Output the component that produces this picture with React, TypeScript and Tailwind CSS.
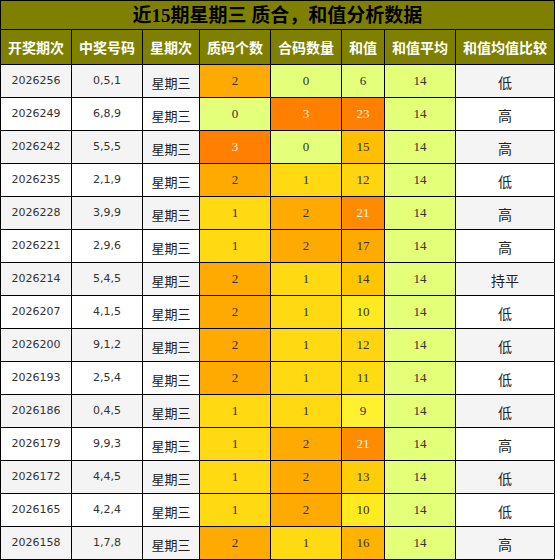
import React from 'react';

type Row = { issue: string; nums: string; prime: number; comp: number; sum: number; cmp: string };

const rows: Row[] = [
  { issue: '2026256', nums: '0,5,1', prime: 2, comp: 0, sum: 6, cmp: '低' },
  { issue: '2026249', nums: '6,8,9', prime: 0, comp: 3, sum: 23, cmp: '高' },
  { issue: '2026242', nums: '5,5,5', prime: 3, comp: 0, sum: 15, cmp: '高' },
  { issue: '2026235', nums: '2,1,9', prime: 2, comp: 1, sum: 12, cmp: '低' },
  { issue: '2026228', nums: '3,9,9', prime: 1, comp: 2, sum: 21, cmp: '高' },
  { issue: '2026221', nums: '2,9,6', prime: 1, comp: 2, sum: 17, cmp: '高' },
  { issue: '2026214', nums: '5,4,5', prime: 2, comp: 1, sum: 14, cmp: '持平' },
  { issue: '2026207', nums: '4,1,5', prime: 2, comp: 1, sum: 10, cmp: '低' },
  { issue: '2026200', nums: '9,1,2', prime: 2, comp: 1, sum: 12, cmp: '低' },
  { issue: '2026193', nums: '2,5,4', prime: 2, comp: 1, sum: 11, cmp: '低' },
  { issue: '2026186', nums: '0,4,5', prime: 1, comp: 1, sum: 9, cmp: '低' },
  { issue: '2026179', nums: '9,9,3', prime: 1, comp: 2, sum: 21, cmp: '高' },
  { issue: '2026172', nums: '4,4,5', prime: 1, comp: 2, sum: 13, cmp: '低' },
  { issue: '2026165', nums: '4,2,4', prime: 1, comp: 2, sum: 10, cmp: '低' },
  { issue: '2026158', nums: '1,7,8', prime: 2, comp: 1, sum: 16, cmp: '高' },
];

// count cells: 0..3
const countCls: Record<number, string> = {
  0: 'bg-[#e4ff7a] text-[#333]',
  1: 'bg-[#ffd911] text-[#333]',
  2: 'bg-[#ffaa00] text-[#333]',
  3: 'bg-[#ff8000] text-[#f4f4f4]',
};

const sumCls: Record<number, string> = {
  6: 'bg-[#e4ff7a] text-[#333]',
  9: 'bg-[#fff030] text-[#333]',
  10: 'bg-[#ffea20] text-[#333]',
  11: 'bg-[#ffdc12] text-[#333]',
  12: 'bg-[#ffd512] text-[#333]',
  13: 'bg-[#ffcc08] text-[#333]',
  14: 'bg-[#ffc600] text-[#333]',
  15: 'bg-[#ffbf00] text-[#333]',
  16: 'bg-[#ffb200] text-[#333]',
  17: 'bg-[#ffaa00] text-[#333]',
  21: 'bg-[#ff8c00] text-[#f4f4f4]',
  23: 'bg-[#ff8000] text-[#f4f4f4]',
};

const headers = ['开奖期次', '中奖号码', '星期次', '质码个数', '合码数量', '和值', '和值平均', '和值均值比较'];
const widths = ['w-[71px]', 'w-[71px]', 'w-[57px]', 'w-[71px]', 'w-[71px]', 'w-[43px]', 'w-[71px]', 'w-[99px]'];

const td = 'border border-black p-0 text-center align-middle';
const serif = "font-['Liberation_Serif','Noto_Sans_CJK_SC',serif] text-[13px]";
const sans = "font-['DejaVu_Sans','Noto_Sans_CJK_SC',sans-serif] text-[11px] text-[#333]";
const cjk = "font-['Noto_Sans_CJK_SC',sans-serif] text-[#222]";

export default function App() {
  return (
    <div className="w-[555px] h-[560px] overflow-hidden bg-white">
      <div className="h-[29px] bg-[#808000] border border-black border-b-0 flex items-center justify-center">
        <span className="font-['Liberation_Serif','Noto_Sans_CJK_SC',serif] text-[19px] font-bold text-black leading-none">
          近15期星期三 质合，和值分析数据
        </span>
      </div>
      <table className="w-[555px] table-fixed border-collapse">
        <colgroup>
          {widths.map((w, i) => (
            <col key={i} className={w} />
          ))}
        </colgroup>
        <thead>
          <tr className="h-[35px] bg-[#808000]">
            {headers.map((h) => (
              <th key={h} className={`${td} text-white font-bold text-[14px] font-['Noto_Sans_CJK_SC',sans-serif] whitespace-nowrap`}>
                {h}
              </th>
            ))}
          </tr>
        </thead>
        <tbody>
          {rows.map((r, i) => {
            const base = i % 2 === 0 ? 'bg-[#f4f4f4]' : 'bg-white';
            return (
              <tr key={r.issue} className="h-[33px]">
                <td className={`${td} ${base} ${sans}`}>{r.issue}</td>
                <td className={`${td} ${base} ${sans}`}>{r.nums}</td>
                <td className={`${td} ${base} ${cjk} text-[13px] pt-[3px]`}>星期三</td>
                <td className={`${td} ${serif} ${countCls[r.prime]}`}>{r.prime}</td>
                <td className={`${td} ${serif} ${countCls[r.comp]}`}>{r.comp}</td>
                <td className={`${td} ${serif} ${sumCls[r.sum]}`}>{r.sum}</td>
                <td className={`${td} ${serif} bg-[#e4ff78] text-[#333]`}>14</td>
                <td className={`${td} ${base} ${cjk} text-[14px] pt-[3px]`}>{r.cmp}</td>
              </tr>
            );
          })}
        </tbody>
      </table>
    </div>
  );
}
